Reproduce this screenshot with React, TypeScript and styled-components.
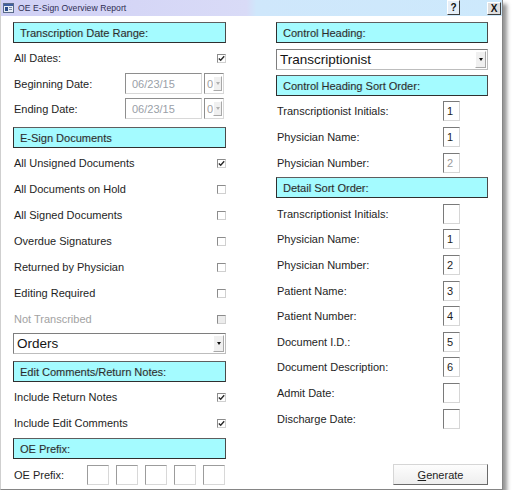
import React from "react";
import styled, { createGlobalStyle } from "styled-components";

const GlobalStyle = createGlobalStyle`
  html, body { margin: 0; padding: 0; background: #ffffff; }
  body { font-family: "Liberation Sans", Arial, sans-serif; }
  * { box-sizing: border-box; }
`;

const Window = styled.div`
  width: 503px;
  height: 490px;
  background: #ffffff;
  border-left: 1px solid #cfcfcf;
  border-right: 1px solid #858585;
  border-bottom: 1px solid #858585;
  box-shadow: 4px 4px 4px rgba(0, 0, 0, 0.42);
  display: flex;
  flex-direction: column;
`;

const TitleBar = styled.div`
  height: 16px;
  flex: none;
  display: flex;
  align-items: center;
  padding-left: 2px;
  background: linear-gradient(to right, #d0d0f5 0%, #d9dbf7 49%, #cfe7fb 51%, #cde9fc 100%);
`;

const TitleText = styled.span`
  flex: 1;
  margin-left: 4px;
  font-size: 8.6px;
  color: #2e2e52;
  letter-spacing: 0.05px;
`;

const TitleButton = styled.div<{ $close?: boolean }>`
  align-self: ${(p) => (p.$close ? "center" : "flex-start")};
  width: ${(p) => (p.$close ? 14 : 13)}px;
  height: ${(p) => (p.$close ? 13 : 15)}px;
  margin-right: ${(p) => (p.$close ? 1 : 27)}px;
  display: flex;
  align-items: center;
  justify-content: center;
  font-size: 10px;
  font-weight: bold;
  color: #111;
  background: ${(p) => (p.$close ? "#dedede" : "#e6eff8")};
  border: 1px solid;
  border-color: #ffffff #3e3e3e #3e3e3e #ffffff;
`;

const Body = styled.div`
  display: grid;
  grid-template-columns: 213px 212px;
  column-gap: 50px;
  padding: 6px 0 0 12px;
`;

const Column = styled.div`
  display: flex;
  flex-direction: column;
`;

const SectionHeader = styled.div<{ $mt?: number }>`
  height: 21px;
  flex: none;
  margin-top: ${(p) => p.$mt ?? 0}px;
  display: flex;
  align-items: center;
  padding-left: 6px;
  background: #a4fbff;
  border: 1px solid #2f2f2f;
  border-top-color: #5e5e5e;
  border-right-color: #4a4a4a;
  font-size: 11px;
  color: #2a2a2a;
  text-shadow: 1px 0 0 rgba(60, 60, 60, 0.18);
`;

const CheckRow = styled.div<{ $mt?: number; $disabled?: boolean }>`
  height: 26px;
  flex: none;
  margin-top: ${(p) => p.$mt ?? 0}px;
  display: flex;
  align-items: center;
  justify-content: space-between;
  padding-left: 1px;
  font-size: 11px;
  color: ${(p) => (p.$disabled ? "#a2a2a2" : "#1e1e1e")};
`;

const Box = styled.span<{ $disabled?: boolean }>`
  width: 9px;
  height: 9px;
  display: flex;
  align-items: center;
  justify-content: center;
  background: ${(p) => (p.$disabled ? "#ececec" : "#ffffff")};
  border: 1px solid;
  border-color: #8c8c8c #d0d0d0 #d0d0d0 #8c8c8c;
`;

const Label = styled.span`
  font-size: 11px;
  color: #1e1e1e;
  padding-left: 1px;
  white-space: nowrap;
`;

const DateRow = styled.div`
  height: 25px;
  flex: none;
  display: grid;
  grid-template-columns: 110px 77px 20px;
  column-gap: 2px;
  align-items: center;
`;

const DateInput = styled.div`
  height: 21px;
  display: flex;
  align-items: center;
  padding-left: 6px;
  font-size: 11px;
  color: #9aa0a8;
  border: 1px solid;
  border-color: #8e8e8e #d8d8d8 #d8d8d8 #8e8e8e;
`;

const SmallCombo = styled.div`
  height: 21px;
  display: flex;
  align-items: center;
  overflow: hidden;
  font-size: 11px;
  color: #a0a0a0;
  padding-left: 2px;
  border: 1px solid;
  border-color: #8e8e8e #d8d8d8 #d8d8d8 #8e8e8e;
`;

const ComboText = styled.span`
  width: 6px;
  overflow: hidden;
`;

const DropButton = styled.span<{ $disabled?: boolean }>`
  margin-left: auto;
  margin-right: 1px;
  width: ${(p) => (p.$disabled ? 9 : 11)}px;
  height: ${(p) => (p.$disabled ? 15 : 17)}px;
  display: flex;
  align-items: center;
  justify-content: center;
  background: #f0f0f0;
  border: 1px solid;
  border-color: #ffffff #a8a8a8 #a8a8a8 #ffffff;
  &::after {
    content: "";
    border-left: 2.5px solid transparent;
    border-right: 2.5px solid transparent;
    border-top: 3px solid ${(p) => (p.$disabled ? "#b0b0b0" : "#111111")};
  }
`;

const Select = styled.div<{ $mt?: number }>`
  height: 21px;
  flex: none;
  margin-top: ${(p) => p.$mt ?? 0}px;
  display: flex;
  align-items: center;
  padding-left: 3px;
  font-size: 13.5px;
  color: #141414;
  border: 1px solid;
  border-color: #7e7e7e #bdbdbd #bdbdbd #7e7e7e;
`;

const SortRow = styled.div<{ $h: number; $mt?: number }>`
  height: ${(p) => p.$h}px;
  flex: none;
  margin-top: ${(p) => p.$mt ?? 0}px;
  display: grid;
  grid-template-columns: 167px 17px;
  align-items: center;
`;

const NumBox = styled.div<{ $muted?: boolean }>`
  width: 17px;
  height: 20px;
  padding: 3px 0 0 3px;
  font-size: 11px;
  line-height: 12px;
  color: ${(p) => (p.$muted ? "#9a9a9a" : "#1e1e1e")};
  border: 1px solid;
  border-color: #7a7a7a #d6d6d6 #d6d6d6 #7a7a7a;
`;

const PrefixRow = styled.div`
  height: 20px;
  flex: none;
  margin-top: 6px;
  display: flex;
  align-items: center;
  gap: 7px;
`;

const PrefixLabel = styled(Label)`
  width: 67px;
`;

const PrefixBox = styled.div`
  width: 22px;
  height: 20px;
  border: 1px solid;
  border-color: #9c9c9c #d8d8d8 #d8d8d8 #9c9c9c;
`;

const GenerateButton = styled.div`
  margin-top: auto;
  align-self: flex-end;
  width: 95px;
  height: 21px;
  display: flex;
  align-items: center;
  justify-content: center;
  font-size: 11px;
  color: #1e1e1e;
  background: linear-gradient(#fdfdfd, #eeeeee);
  border: 1px solid;
  border-color: #d6d6d6 #6a6a6a #6a6a6a #d6d6d6;
  & u { text-decoration: underline; }
`;

const Check = ({ on, disabled }: { on?: boolean; disabled?: boolean }) => (
  <Box $disabled={disabled}>
    {on && (
      <svg width="7" height="7" viewBox="0 0 7 7">
        <path d="M0.8 3.4 L2.7 5.3 L6.2 1.2" fill="none" stroke="#2a2a2a" strokeWidth="1.4" />
      </svg>
    )}
  </Box>
);

const AppIcon = () => (
  <svg width="11" height="10" viewBox="0 0 11 10">
    <rect x="0.5" y="0.5" width="10" height="9" fill="#e8eef6" stroke="#5a6a88" />
    <rect x="1" y="1" width="9" height="2" fill="#3f5f9f" />
    <rect x="2" y="4" width="3" height="4" fill="#2b4c88" />
    <rect x="6" y="4" width="3" height="1" fill="#7a8aa8" />
    <rect x="6" y="6" width="3" height="1" fill="#7a8aa8" />
  </svg>
);

const docRows: { label: string; on?: boolean; disabled?: boolean }[] = [
  { label: "All Unsigned Documents", on: true },
  { label: "All Documents on Hold" },
  { label: "All Signed Documents" },
  { label: "Overdue Signatures" },
  { label: "Returned by Physician" },
  { label: "Editing Required" },
  { label: "Not Transcribed", disabled: true },
];

const headingSort: { label: string; value: string; muted?: boolean }[] = [
  { label: "Transcriptionist Initials:", value: "1" },
  { label: "Physician Name:", value: "1" },
  { label: "Physician Number:", value: "2", muted: true },
];

const detailSort: { label: string; value: string }[] = [
  { label: "Transcriptionist Initials:", value: "" },
  { label: "Physician Name:", value: "1" },
  { label: "Physician Number:", value: "2" },
  { label: "Patient Name:", value: "3" },
  { label: "Patient Number:", value: "4" },
  { label: "Document I.D.:", value: "5" },
  { label: "Document Description:", value: "6" },
  { label: "Admit Date:", value: "" },
  { label: "Discharge Date:", value: "" },
];

export default function App() {
  return (
    <>
      <GlobalStyle />
      <Window>
        <TitleBar>
          <AppIcon />
          <TitleText>OE E-Sign Overview Report</TitleText>
          <TitleButton>?</TitleButton>
          <TitleButton $close>X</TitleButton>
        </TitleBar>
        <Body>
          <Column>
            <SectionHeader>Transcription Date Range:</SectionHeader>
            <CheckRow $mt={2}>
              All Dates:
              <Check on />
            </CheckRow>
            <DateRow>
              <Label>Beginning Date:</Label>
              <DateInput>06/23/15</DateInput>
              <SmallCombo>
                <ComboText>0</ComboText>
                <DropButton $disabled />
              </SmallCombo>
            </DateRow>
            <DateRow>
              <Label>Ending Date:</Label>
              <DateInput>06/23/15</DateInput>
              <SmallCombo>
                <ComboText>0</ComboText>
                <DropButton $disabled />
              </SmallCombo>
            </DateRow>
            <SectionHeader $mt={6}>E-Sign Documents</SectionHeader>
            {docRows.map((r, i) => (
              <CheckRow key={r.label} $mt={i === 0 ? 2 : 0} $disabled={r.disabled}>
                {r.label}
                <Check on={r.on} disabled={r.disabled} />
              </CheckRow>
            ))}
            <Select $mt={1}>
              Orders
              <DropButton />
            </Select>
            <SectionHeader $mt={7}>Edit Comments/Return Notes:</SectionHeader>
            <CheckRow $mt={2}>
              Include Return Notes
              <Check on />
            </CheckRow>
            <CheckRow>
              Include Edit Comments
              <Check on />
            </CheckRow>
            <SectionHeader $mt={2}>OE Prefix:</SectionHeader>
            <PrefixRow>
              <PrefixLabel>OE Prefix:</PrefixLabel>
              <PrefixBox />
              <PrefixBox />
              <PrefixBox />
              <PrefixBox />
              <PrefixBox />
            </PrefixRow>
          </Column>
          <Column>
            <SectionHeader>Control Heading:</SectionHeader>
            <Select $mt={6}>
              Transcriptionist
              <DropButton />
            </Select>
            <SectionHeader $mt={5}>Control Heading Sort Order:</SectionHeader>
            {headingSort.map((r, i) => (
              <SortRow key={r.label} $h={26} $mt={i === 0 ? 2 : 0}>
                <Label>{r.label}</Label>
                <NumBox $muted={r.muted}>{r.value}</NumBox>
              </SortRow>
            ))}
            <SectionHeader $mt={1}>Detail Sort Order:</SectionHeader>
            {detailSort.map((r, i) => (
              <SortRow key={r.label + i} $h={25.6} $mt={i === 0 ? 3 : 0}>
                <Label>{r.label}</Label>
                <NumBox>{r.value}</NumBox>
              </SortRow>
            ))}
            <GenerateButton>
              <span>
                <u>G</u>enerate
              </span>
            </GenerateButton>
          </Column>
        </Body>
      </Window>
    </>
  );
}
